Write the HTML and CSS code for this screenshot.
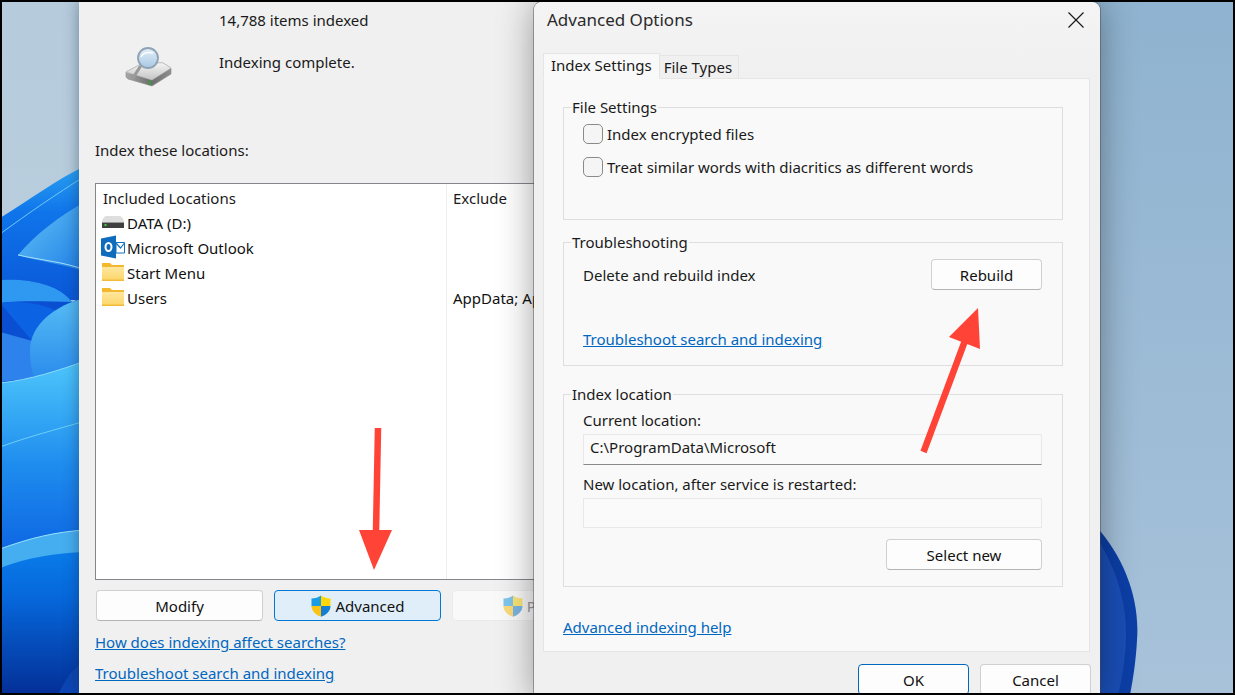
FILE: index.html
```html
<!DOCTYPE html>
<html lang="en">
<head>
<meta charset="utf-8">
<title>Indexing Options - Advanced Options</title>
<link rel="stylesheet" href="styles.css">
</head>
<body>
<svg class="defs" width="0" height="0" aria-hidden="true">
  <defs>
    <clipPath id="shield-clip"><path d="M11 .5C8.500 2.500 5 3.500 1.500 3.500V11C1.500 16.500 6 20 11 21.800C16 20 20.500 16.500 20.500 11V3.500C17 3.500 13.500 2.500 11 .5Z"/></clipPath>
    <linearGradient id="folder-fill" x1="0" y1="0" x2="0" y2="1"><stop offset="0" stop-color="#ffe8a3"/><stop offset="1" stop-color="#fbd566"/></linearGradient>
    <symbol id="shield" viewBox="0 0 22 22">
      <g clip-path="url(#shield-clip)">
        <rect width="11" height="11" fill="#1b9de2"/>
        <rect x="11" width="11" height="11" fill="#ffd60a"/>
        <rect y="11" width="11" height="11" fill="#fbc414"/>
        <rect x="11" y="11" width="11" height="11" fill="#1580d2"/>
      </g>
    </symbol>
    <symbol id="folder" viewBox="0 0 22 18">
      <path d="M0 0H8L10 2H22V4H0Z" fill="#f5b72c"/>
      <rect y="3" width="22" height="15" fill="url(#folder-fill)"/>
      <rect y="16.500" width="22" height="1.500" fill="#f2bb3b"/>
      <rect y="3" width="22" height="1" fill="#f0b836"/>
    </symbol>
  </defs>
</svg>

<div class="screen">
  <svg class="wallpaper" viewBox="2 2 1231 691" width="1231" height="691" aria-hidden="true">
    <defs>
      <linearGradient id="sky-left" x1="0" y1="0" x2="0" y2="1"><stop offset="0" stop-color="#b6cbdb"/><stop offset="1" stop-color="#bdd1e0"/></linearGradient>
      <linearGradient id="sky-right" x1="0" y1="0" x2="0" y2="1"><stop offset="0" stop-color="#8fb3d0"/><stop offset="1" stop-color="#a8c2da"/></linearGradient>
      <linearGradient id="base-blue" x1="0" y1="0" x2="0" y2="1">
        <stop offset="0" stop-color="#2aa2f2"/><stop offset=".35" stop-color="#0f74ea"/><stop offset="1" stop-color="#0a58d8"/>
      </linearGradient>
      <linearGradient id="spear" x1="0" y1="0" x2="1" y2="1"><stop offset="0" stop-color="#64c4f6"/><stop offset="1" stop-color="#1f7fe6"/></linearGradient>
      <linearGradient id="blob" x1="0" y1="0" x2="0" y2="1"><stop offset="0" stop-color="#56bdf4"/><stop offset="1" stop-color="#2b8cec"/></linearGradient>
      <linearGradient id="sweep" x1="0" y1="0" x2="0" y2="1"><stop offset="0" stop-color="#4ec6fb"/><stop offset=".5" stop-color="#1e8cee"/><stop offset="1" stop-color="#0a5ee0"/></linearGradient>
      <linearGradient id="deep" x1="0" y1="0" x2="0" y2="1"><stop offset="0" stop-color="#0b84f0"/><stop offset=".4" stop-color="#0668dc"/><stop offset="1" stop-color="#042f96"/></linearGradient>
    </defs>
    <rect x="0" y="0" width="90" height="700" fill="url(#sky-left)"/>
    <rect x="1090" y="0" width="150" height="700" fill="url(#sky-right)"/>
    <path d="M0 218C30 200 55 180 85 166V300H0Z" fill="url(#base-blue)"/>
    <path d="M0 234C30 212 55 195 85 176" fill="none" stroke="#6fcbf7" stroke-width="1"/>
    <path d="M18 255C35 235 60 215 85 202V272C65 264 40 262 18 255Z" fill="url(#spear)"/>
    <path d="M18 255C40 260 65 262 85 270" fill="none" stroke="#a5e0fa" stroke-width="1"/>
    <path d="M0 280C30 278 60 285 72 302L85 296V400H0Z" fill="#0a4fd2"/>
    <path d="M0 280C30 278 60 285 72 302C50 302 25 300 0 303Z" fill="#2f98f0"/>
    <path d="M0 303C25 300 45 305 58 312L40 335L33 342Z" fill="#0b62e2"/>
    <path d="M0 332L36 342L33 378L0 382Z" fill="#2e82ec"/>
    <path d="M85 298C55 305 30 325 30 350C30 362 32 372 34 378L85 365Z" fill="url(#blob)"/>
    <path d="M0 383C30 380 60 370 85 361V570H0Z" fill="url(#sweep)"/>
    <path d="M0 383C30 380 60 370 85 361" fill="none" stroke="#8bdcfb" stroke-width="1"/>
    <path d="M0 447C30 436 55 430 85 421" fill="none" stroke="#6ed0f8" stroke-width="1"/>
    <path d="M0 549C30 538 55 532 85 530V695H0Z" fill="url(#deep)"/>
    <path d="M0 549C30 538 55 532 85 530V552C55 553 25 558 0 568Z" fill="#45aef0"/>
    <path d="M0 549C30 538 55 532 85 530" fill="none" stroke="#9ae2fb" stroke-width="1"/>
    <path d="M58 695C65 680 72 668 85 662V695Z" fill="#0c46b4"/>
    <path d="M1095 525C1125 558 1140 600 1137 640C1136 660 1133 680 1130 695H1095Z" fill="#0c3ea6"/>
    <path d="M1095 535C1115 565 1127 600 1126 640C1125 660 1122 680 1118 695H1095Z" fill="#1a4eb6"/>
  </svg>

  <section class="window main-window">
    <div class="status">
      <div class="status-icon">
        <svg class="disk-icon" viewBox="0 0 48 40" width="48" height="40" aria-hidden="true">
          <defs>
            <linearGradient id="disk-top" x1="0" y1="0" x2="0" y2="1"><stop offset="0" stop-color="#f4f4f4"/><stop offset="1" stop-color="#c4c4c4"/></linearGradient>
            <linearGradient id="disk-side" x1="0" y1="0" x2="1" y2="0"><stop offset="0" stop-color="#a8a8a8"/><stop offset=".55" stop-color="#6c6c6c"/><stop offset="1" stop-color="#8e8e8e"/></linearGradient>
            <linearGradient id="lens" x1="0" y1="0" x2="0" y2="1"><stop offset="0" stop-color="#e3eef8"/><stop offset="1" stop-color="#a9c8e4"/></linearGradient>
          </defs>
          <path d="M1 25L18 16H38L46 21V27L27 39L3 32L1 30Z" fill="url(#disk-side)" stroke="#8a8a8a" stroke-width=".6" stroke-linejoin="round"/>
          <path d="M1 25L18 16H38L46 21L27 33Z" fill="url(#disk-top)" stroke="#bdbdbd" stroke-width=".6" stroke-linejoin="round"/>
          <rect x="23.500" y="33.500" width="2.500" height="4.500" fill="#3f9a3f"/>
          <path d="M8 31L15 20" stroke="#9a9a9a" stroke-width="3.200" stroke-linecap="round"/>
          <circle cx="23" cy="11" r="10" fill="url(#lens)" stroke="#8fa2b4" stroke-width="1.800"/>
          <path d="M16 10C18 6 23 5 28 6" fill="none" stroke="#fff" stroke-width="1.500"/>
        </svg>
      </div>
      <div class="status-text">
        <p class="text">14,788 items indexed</p>
        <p class="text status-state">Indexing complete.</p>
      </div>
    </div>
    <p class="text">Index these locations:</p>

    <div class="list">
      <div class="col">
        <div class="col-head">Included Locations</div>
        <div class="row">
          <svg class="row-icon" viewBox="0 0 22 18" aria-hidden="true">
            <path d="M0 9.500C0 6 2 3.500 4 3H18C20 3.500 22 6 22 9.500Z" fill="#dedede"/>
            <rect y="9.500" width="22" height="5.500" fill="#404040"/>
            <rect x="2.500" y="11" width="2" height="2" fill="#3fd03f"/>
          </svg>
          <span>DATA (D:)</span>
        </div>
        <div class="row">
          <svg class="row-icon-wide" viewBox="0 0 24 24" aria-hidden="true">
            <path d="M15 7.500H23.500V18H15Z" fill="#fff" stroke="#1272c4"/>
            <path d="M15 8L19.500 13L23.500 8" fill="none" stroke="#1272c4" stroke-width="1.200"/>
            <path d="M0 3.500L15 .5V23.500L0 20.500Z" fill="#0f6cbd"/>
            <ellipse cx="7.500" cy="12" rx="3" ry="4" fill="none" stroke="#fff" stroke-width="2"/>
          </svg>
          <span>Microsoft Outlook</span>
        </div>
        <div class="row">
          <svg class="row-icon"><use href="#folder"/></svg>
          <span>Start Menu</span>
        </div>
        <div class="row">
          <svg class="row-icon"><use href="#folder"/></svg>
          <span>Users</span>
        </div>
      </div>
      <div class="col col-exclude">
        <div class="col-head">Exclude</div>
        <div class="row"></div>
        <div class="row"></div>
        <div class="row"></div>
        <div class="row"><span>AppData; AppData</span></div>
      </div>
    </div>

    <div class="main-actions">
      <button class="btn btn-wide">Modify</button>
      <button class="btn btn-wide btn-focus"><svg class="shield"><use href="#shield"/></svg>Advanced</button>
      <button class="btn btn-wide btn-disabled"><svg class="shield shield-dim"><use href="#shield"/></svg>Pause</button>
    </div>
    <p class="text link-row"><a class="link" href="#">How does indexing affect searches?</a></p>
    <p class="text link-row"><a class="link" href="#">Troubleshoot search and indexing</a></p>
  </section>

  <section class="window dialog">
    <header class="titlebar">
      <h1 class="title">Advanced Options</h1>
      <svg class="close" viewBox="0 0 16 16" width="16" height="16" aria-hidden="true"><path d="M.5 .5L15.500 15.500M15.500 .5L.5 15.500" stroke="#1a1a1a" stroke-width="1.200" fill="none"/></svg>
    </header>
    <div class="tabs">
      <div class="tab tab-active">Index Settings</div>
      <div class="tab tab-plain">File Types</div>
    </div>
    <div class="panel">
      <fieldset class="group group-files">
        <legend class="legend">File Settings</legend>
        <div class="group-body">
          <label class="check check-first"><span class="box"></span>Index encrypted files</label>
          <label class="check check-second"><span class="box"></span>Treat similar words with diacritics as different words</label>
        </div>
      </fieldset>
      <fieldset class="group group-trouble">
        <legend class="legend">Troubleshooting</legend>
        <div class="group-body">
          <div class="rebuild-row">
            <span>Delete and rebuild index</span>
            <button class="btn btn-mid">Rebuild</button>
          </div>
          <p class="text trouble-link"><a class="link" href="#">Troubleshoot search and indexing</a></p>
        </div>
      </fieldset>
      <fieldset class="group group-location">
        <legend class="legend">Index location</legend>
        <div class="group-body">
          <p class="text current-label">Current location:</p>
          <div class="field field-value">C:\ProgramData\Microsoft</div>
          <p class="text new-label">New location, after service is restarted:</p>
          <div class="field field-empty"></div>
          <div class="select-row"><button class="btn btn-select">Select new</button></div>
        </div>
      </fieldset>
      <p class="text help-link"><a class="link" href="#">Advanced indexing help</a></p>
    </div>
    <footer class="dialog-actions">
      <button class="btn btn-mid btn-primary">OK</button>
      <button class="btn btn-mid">Cancel</button>
    </footer>
  </section>

  <svg class="arrows" viewBox="2 2 1231 691" width="1231" height="691" aria-hidden="true">
    <path d="M378 428L376 532" stroke="#ff4336" stroke-width="6.500" fill="none"/>
    <path d="M359 530H392L374 570Z" fill="#ff4336"/>
    <path d="M923.500 452L966 338" stroke="#ff4336" stroke-width="6.500" fill="none"/>
    <path d="M978 308L949 337L980 349Z" fill="#ff4336"/>
  </svg>
</div>
</body>
</html>
```
FILE: styles.css
```css
* { box-sizing: border-box; }

html, body {
  margin: 0;
  padding: 0;
  background: #000;
}

body {
  font-family: "Noto Sans", "Open Sans", sans-serif;
  font-size: 15px;
  line-height: 20px;
  color: #1a1a1a;
}

.defs { position: absolute; }

.screen {
  position: relative;
  width: 1235px;
  height: 695px;
  border: 2px solid #000;
  overflow: hidden;
  background: #a5bfd8;
}

.wallpaper,
.arrows {
  position: absolute;
  left: 0;
  top: 0;
}

.arrows { pointer-events: none; }

.window { position: absolute; top: 0; }

.text { margin: 0; }

.link { color: #0067c0; text-decoration: underline; }

/* Main indexing window */
.main-window {
  left: 77px;
  width: 540px;
  height: 691px;
  padding: 8px 0 0 16px;
  background: #f0f0f0;
  box-shadow: 0 0 14px rgba(20, 40, 70, .45);
}

.status { display: flex; height: 130px; }
.status-icon { width: 124px; padding: 37px 0 0 30px; }
.disk-icon { display: block; }
.status-state { margin-top: 22px; }

.list {
  display: grid;
  grid-template-columns: 350px 1fr;
  width: 510px;
  height: 397px;
  margin-top: 23px;
  border: 1px solid #85858b;
  background: #fff;
}

.col { padding-top: 4px; }
.col-exclude { border-left: 1px solid #e9eef4; }
.col-head { height: 20px; padding-left: 7px; margin-bottom: 3px; }
.col-exclude .col-head { padding-left: 6px; }

.row {
  display: flex;
  align-items: flex-start;
  height: 25px;
  padding-top: 2px;
  white-space: nowrap;
  color: #111;
}
.col-exclude .row { padding-left: 6px; }
.row-icon { width: 22px; height: 22px; margin: -2px 3px 0 6px; flex: none; }
.row-icon-wide { width: 24px; height: 24px; margin: -3px 2px 0 5px; flex: none; }

.btn {
  display: inline-flex;
  align-items: center;
  justify-content: center;
  height: 31px;
  padding: 0;
  font: inherit;
  color: #111;
  background: #fdfdfd;
  border: 1px solid #d0d0d0;
  border-bottom-color: #b4b4b4;
  border-radius: 4px;
}
.btn-wide { width: 167px; }
.btn-mid { width: 111px; }
.btn-select { width: 156px; }
.btn-focus { background: #e0eef9; border-color: #0078d4; }
.btn-primary { border-color: #0067c0; border-width: 1.500px; }
.btn-disabled { background: #f9f9f9; border-color: #ebebeb; color: #9a9a9a; }

.shield { width: 22px; height: 22px; margin-right: 3px; }
.shield-dim { opacity: .55; }

.main-actions { display: flex; gap: 11px; margin: 10px 0 0 1px; }
.link-row { margin-top: 11px; }

/* Advanced Options dialog */
.dialog {
  left: 532px;
  width: 566px;
  height: 700px;
  padding-top: 8px;
  border-radius: 8px 8px 0 0;
  background: linear-gradient(#f4f4f4, #f0f0f0 80px);
  box-shadow: 0 0 0 1px rgba(70, 70, 70, .45), 0 0 36px rgba(0, 0, 0, .38);
}

.titlebar {
  display: flex;
  justify-content: space-between;
  align-items: center;
  height: 20px;
  padding: 0 16px 0 13px;
}
.title { margin: 0; font-size: 17px; font-weight: 400; line-height: 20px; color: #2a2a2a; }
.close { display: block; }

.tabs {
  display: flex;
  align-items: flex-end;
  height: 26px;
  margin: 23px 0 -1px 9px;
  position: relative;
  z-index: 1;
}
.tab {
  height: 24px;
  padding: 1px 3px 0;
  border: 1px solid #e5e5e5;
  border-left-width: 0;
  background: #f0f0f0;
}
.tab-plain { width: 79px; padding-left: 4px; }
.tab-active {
  height: 26px;
  padding: 1px 7px 0;
  border-left-width: 1px;
  border-bottom-color: #f9f9f9;
  background: #f9f9f9;
}

.panel {
  height: 574px;
  margin: 0 10px 0 9px;
  padding: 18px 26px 0 19px;
  border: 1px solid #e5e5e5;
  background: #f9f9f9;
}

.group {
  margin: 0;
  padding: 0;
  border: 1px solid #dedede;
  min-width: 0;
}
.group-files { height: 123px; }
.group-trouble { height: 134px; margin-top: 12px; }
.group-location { height: 203px; margin-top: 18px; }

.legend { padding: 0 1px; margin-left: 7px; }
.group-body { padding: 0 20px 0 19px; }

.check { display: flex; align-items: center; gap: 4px; white-space: nowrap; }
.check-first { margin-top: 7px; }
.check-second { margin-top: 13px; }
.box {
  width: 20px;
  height: 20px;
  background: #f5f5f5;
  border: 1px solid #8a8a8a;
  border-radius: 5px;
}

.rebuild-row {
  display: flex;
  justify-content: space-between;
  align-items: center;
  margin-top: 7px;
}
.trouble-link { margin-top: 39px; }

.current-label { margin-top: 6px; }
.new-label { margin-top: 9px; }
.field {
  margin-top: 4px;
  padding-left: 6px;
  border: 1px solid #e8e8e8;
  background: #fafafa;
}
.field-value { height: 31px; line-height: 25px; border-bottom: 1px solid #8a8a8a; }
.field-empty { height: 30px; }
.select-row { display: flex; justify-content: flex-end; margin-top: 11px; }

.help-link { margin-top: 30px; }

.dialog-actions {
  display: flex;
  justify-content: flex-end;
  gap: 11px;
  margin-top: 12px;
  padding-right: 9px;
}
```
